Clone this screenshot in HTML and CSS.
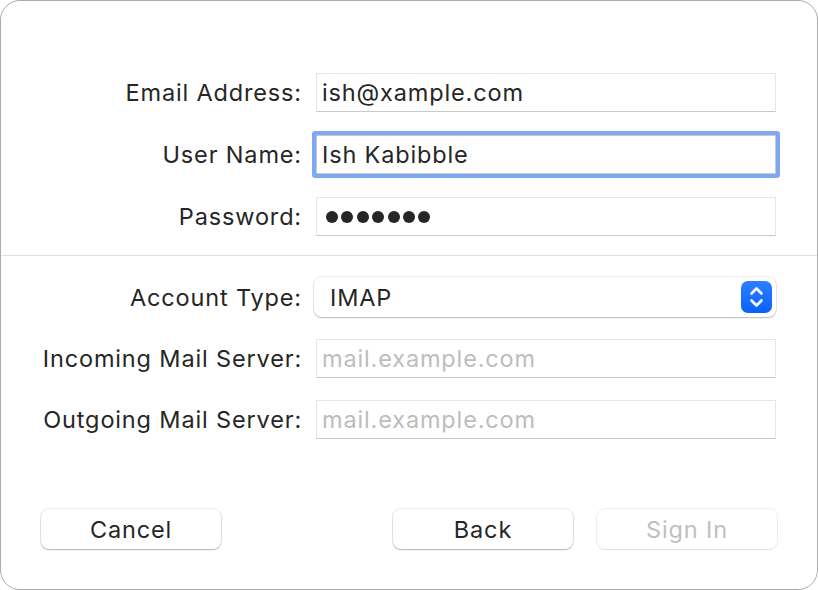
FILE: index.html
```html
<!DOCTYPE html>
<html lang="en">
<head>
    <meta charset="UTF-8">
    <meta name="viewport" content="width=device-width, initial-scale=1.0">
    <title>Add Account</title>
    <link rel="stylesheet" href="styles.css">
</head>
<body>
    <div class="window">
        <div class="form-group">
            <label class="label">Email Address:</label>
            <div class="field">ish@xample.com</div>

            <label class="label">User Name:</label>
            <div class="field field-focus">Ish Kabibble</div>

            <label class="label">Password:</label>
            <div class="field">
                <span class="dots">
                    <span></span><span></span><span></span><span></span><span></span><span></span><span></span>
                </span>
            </div>
        </div>

        <div class="separator"></div>

        <div class="form-group">
            <label class="label">Account Type:</label>
            <div class="popup">
                <span>IMAP</span>
                <span class="stepper">
                    <svg viewBox="0 0 31 32" fill="none" stroke="white" stroke-width="2.6" stroke-linecap="round" stroke-linejoin="round">
                        <path d="M10.5 12.5l5-5 5 5"></path>
                        <path d="M10.5 19.5l5 5 5-5"></path>
                    </svg>
                </span>
            </div>

            <label class="label">Incoming Mail Server:</label>
            <div class="field placeholder">mail.example.com</div>

            <label class="label">Outgoing Mail Server:</label>
            <div class="field placeholder">mail.example.com</div>
        </div>

        <div class="buttons">
            <button class="btn">Cancel</button>
            <div class="buttons-right">
                <button class="btn">Back</button>
                <button class="btn btn-disabled" disabled>Sign In</button>
            </div>
        </div>
    </div>
</body>
</html>
```

FILE: styles.css
```css
* {
    margin: 0;
    padding: 0;
    box-sizing: border-box;
}

body {
    font-family: Inter, "Noto Sans", "Liberation Sans", sans-serif;
    background: #fff;
    color: #262626;
}

.window {
    width: 818px;
    height: 590px;
    border: 1px solid #ababab;
    border-radius: 20px;
    background: #fff;
    padding-top: 72px;
}

.form-group {
    display: grid;
    grid-template-columns: 301px 460px;
    column-gap: 14px;
    row-gap: 23px;
    align-items: center;
}

.form-group + .separator + .form-group {
    row-gap: 22px;
}

.label {
    text-align: right;
    font-size: 23.5px;
    letter-spacing: 0.85px;
    color: #262626;
}

.field {
    height: 39px;
    border: 1px solid #e6e6e6;
    border-bottom-color: #c9c9c9;
    background: #fff;
    padding: 0 5px;
    font-size: 23.5px;
    letter-spacing: 0.85px;
    display: flex;
    align-items: center;
}

.field-focus {
    border-color: #c9c9c9;
    box-shadow: 0 0 0 4px #7ea8f4;
    border-radius: 1px;
}

.placeholder {
    color: #bdbdbd;
}

.dots {
    display: flex;
    gap: 3.4px;
    padding-left: 4px;
}

.dots span {
    width: 12px;
    height: 12px;
    border-radius: 50%;
    background: #262626;
}

.separator {
    height: 1px;
    background: #dedede;
    margin: 19px 0 21px;
}

.popup {
    height: 40px;
    margin-left: -2px;
    width: 462px;
    border-radius: 8px;
    background: #fff;
    box-shadow: 0 0 0 1px rgba(0, 0, 0, 0.07), 0 1px 1.5px rgba(0, 0, 0, 0.22);
    display: flex;
    align-items: center;
    justify-content: space-between;
    padding: 0 4px 0 16px;
    font-size: 23.5px;
    letter-spacing: 0.85px;
}

.stepper {
    width: 31px;
    height: 32px;
    border-radius: 7px;
    background: linear-gradient(#2c80ff, #0a60ff);
    display: flex;
}

.stepper svg {
    width: 31px;
    height: 32px;
}

.buttons {
    display: flex;
    justify-content: space-between;
    padding: 0 40px 0 40px;
    margin-top: 70px;
}

.buttons-right {
    display: flex;
    gap: 24px;
}

.btn {
    width: 180px;
    height: 40px;
    border: none;
    border-radius: 8px;
    background: #fff;
    font-family: inherit;
    font-size: 23.5px;
    letter-spacing: 0.85px;
    color: #262626;
    box-shadow: 0 0 0 1px rgba(0, 0, 0, 0.07), 0 1px 1.5px rgba(0, 0, 0, 0.25);
}

.btn-disabled {
    color: #bfbfbf;
    box-shadow: 0 0 0 1px rgba(0, 0, 0, 0.06), 0 1px 1px rgba(0, 0, 0, 0.06);
}
```
